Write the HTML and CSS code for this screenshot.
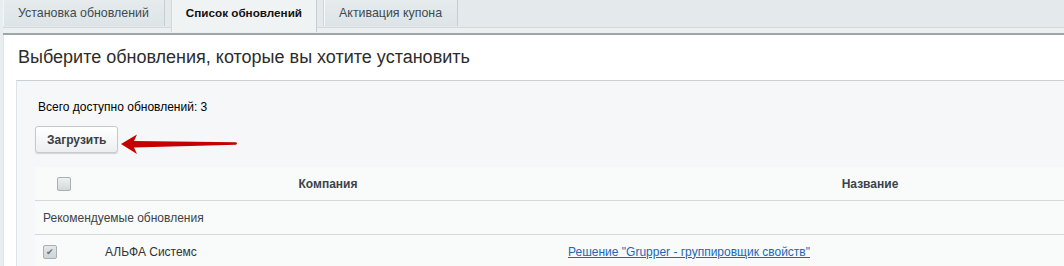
FILE: index.html
```html
<!DOCTYPE html>
<html lang="ru">
<head>
  <meta charset="UTF-8">
  <title>Список обновлений</title>
  <link rel="stylesheet" href="styles.css">
</head>
<body>
  <div class="tabs">
    <div class="tab">Установка обновлений</div>
    <div class="tab active">Список обновлений</div>
    <div class="tab">Активация купона</div>
  </div>
  <div class="tabs-line"></div>

  <div class="panel">
    <h1>Выберите обновления, которые вы хотите установить</h1>

    <div class="inner">
      <div class="total">Всего доступно обновлений: 3</div>
      <div class="btn-row">
        <button class="btn">Загрузить</button>
        <svg class="arrow" width="120" height="22" viewBox="0 0 120 22">
          <path d="M1,10 L17,0.5 L14,7 L116,8.3 Q118,9.5 116,10.8 L14,13.5 L17,20 Z" fill="#c40000"/>
        </svg>
      </div>

      <table class="list">
        <colgroup>
          <col class="c-check">
          <col class="c-company">
          <col class="c-name">
          <col class="c-rest">
        </colgroup>
        <thead>
          <tr>
            <th><span class="chk"></span></th>
            <th>Компания</th>
            <th>Название</th>
            <th></th>
          </tr>
        </thead>
        <tbody>
          <tr class="group">
            <td colspan="4">Рекомендуемые обновления</td>
          </tr>
          <tr>
            <td class="left"><span class="chk checked">&#10004;</span></td>
            <td>АЛЬФА Системс</td>
            <td><a href="#">Решение "Grupper - группировщик свойств"</a></td>
            <td></td>
          </tr>
        </tbody>
      </table>
    </div>
  </div>
</body>
</html>
```

FILE: styles.css
```css
html, body {
  margin: 0;
  height: 100%;
  overflow: hidden;
}
body {
  background: #e8edef;
  font-family: "Liberation Sans", Arial, sans-serif;
  font-size: 12px;
  color: #000;
  padding-left: 3px;
}

.tabs {
  display: flex;
  gap: 6px;
  height: 27px;
  background: #e4e9eb;
  border-bottom: 1px solid #d3d9db;
}
.tab {
  display: flex;
  align-items: center;
  padding: 0 15px 0 15px;
  height: 26px;
  font-size: 12.4px;
  color: #3c4a52;
  background: linear-gradient(#e6ebed, #dde4e7);
  border-left: 1px solid #d0d7da;
  border-right: 1px solid #c6ced2;
  box-shadow: inset 1px 0 0 #f4f6f7;
}
.tab:first-child { border-left: none; }
.tab.active {
  color: #111;
  font-size: 11.7px;
  font-weight: bold;
  background: #f0f3f4;
  height: 32px;
  padding: 6px 14px 0 14px;
  margin-bottom: -6px;
  position: relative;
  z-index: 1;
  align-items: flex-start;
  box-sizing: border-box;
}
.tabs-line {
  height: 5px;
  background: #edf0f1;
  border-bottom: 2px solid #9fa6aa;
}

.panel {
  background: #fff;
  padding: 0 0 0 12px;
  border-left: 1px solid #dfe4e6;
}
h1 {
  margin: 0;
  padding: 12px 0 0 2px;
  height: 33px;
  font-size: 18px;
  font-weight: normal;
  color: #2c2c2c;
}

.inner {
  background: #f5f7f9;
  border-top: 1px solid #c8d1d7;
  border-left: 1px solid #dde3e6;
  padding: 17px 0 0 18px;
}
.total {
  height: 18px;
  line-height: 18px;
  margin-left: 3px;
}
.btn-row {
  display: flex;
  align-items: flex-start;
  margin-top: 10px;
  gap: 2px;
}
.btn {
  height: 27px;
  padding: 0 11px;
  font-family: inherit;
  font-size: 12px;
  font-weight: bold;
  color: #3a3f44;
  background: linear-gradient(#ffffff, #eceff0);
  border: 1px solid #c4cacd;
  border-radius: 3px;
  box-shadow: 0 1px 1px rgba(0,0,0,.15);
}
.arrow {
  margin-top: 8px;
}

.list {
  margin-top: 11px;
  border-collapse: collapse;
  table-layout: fixed;
  width: 1500px;
  background: #f9fbfa;
}
.c-check { width: 60px; }
.c-company { width: 466px; }
.c-name { width: 618px; }
.list th {
  height: 33px;
  font-weight: bold;
  color: #3b4349;
  text-align: center;
  border-bottom: 1px solid #d3d8d9;
  padding: 0;
}
.list th:first-child { padding-right: 3px; }
.list td {
  height: 33px;
  padding: 0 0 0 10px;
  color: #333;
  border-bottom: 1px solid #d3d8d9;
}
.list td.left { padding-left: 8px; }
.list tr.group td { padding-left: 8px; color: #3d4347; }
.list a { color: #2167b5; margin-left: -3px; }

.chk {
  display: inline-block;
  width: 12px;
  height: 12px;
  border: 1px solid #a9b0b4;
  border-radius: 2px;
  background: linear-gradient(#eef0f1, #d3d8da);
  vertical-align: middle;
  font-size: 9px;
  line-height: 12px;
  text-align: center;
  color: #6c7377;
}
.chk.checked {
  background: linear-gradient(#e4e7e8, #cfd4d6);
}
```
